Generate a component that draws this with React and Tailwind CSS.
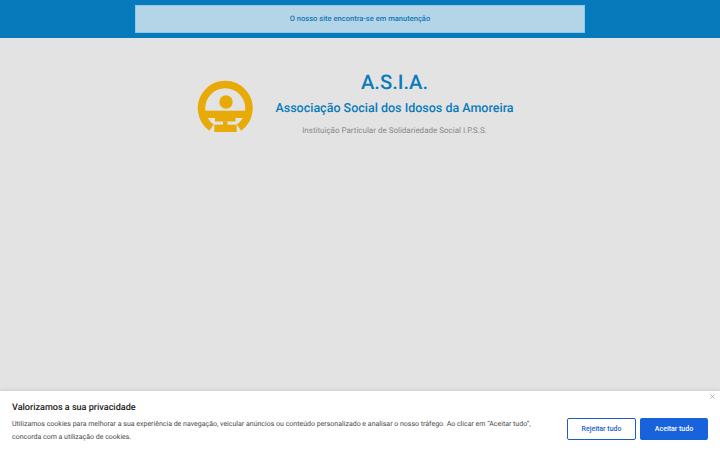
export default function App() {
  return (
    <div className="relative w-[720px] h-[450px] overflow-hidden bg-[#e3e3e3] font-['Roboto',sans-serif] [text-rendering:geometricPrecision]">
      <div className="h-[38px] bg-[#067abb] flex justify-center pt-[5px]">
        <div className="w-[450px] h-[28px] bg-[#b4d5e8] border border-[#8ccaea] flex items-center justify-center text-[#1479b5] text-[7.55px] font-medium">
          O nosso site encontra-se em manutenção
        </div>
      </div>
      <div className="flex pl-[197px] pt-[32px]">
        <svg width="58" height="56" viewBox="0 0 58 56" className="mt-[10px]">
          <path d="M14.5 47.6 A23.75 23.75 0 1 1 42 47.6" fill="none" stroke="#e8aa07" strokeWidth="7.5" />
          <circle cx="29" cy="22" r="6.7" fill="#e8aa07" />
          <rect x="8" y="30.7" width="40.5" height="7.3" fill="#e8aa07" />
          <rect x="18" y="38" width="20.5" height="3.5" fill="#e8aa07" />
          <rect x="26" y="41.5" width="4.5" height="4" fill="#e8aa07" />
          <rect x="17.3" y="44.7" width="22.4" height="7.3" fill="#e8aa07" />
        </svg>
        <div className="ml-[20px] w-[239px] flex flex-col items-center">
          <div className="text-[20.2px] leading-[24px] font-medium text-[#0a7bbb] whitespace-nowrap">A.S.I.A.</div>
          <div className="text-[12.5px] leading-[16px] font-medium text-[#0a7bbb] whitespace-nowrap mt-[7px]">Associação Social dos Idosos da Amoreira</div>
          <div className="text-[8px] leading-[12px] text-[#8a8a8a] whitespace-nowrap mt-[8px]">Instituição Particular de Solidariedade Social I.P.S.S.</div>
        </div>
      </div>
      <div className="absolute left-0 right-0 bottom-0 h-[59px] bg-white shadow-[0_0_4px_rgba(0,0,0,0.15)] flex items-start pl-[12px] pr-[12px]">
        <div className="w-[525px] pt-[11px]">
          <div className="text-[9.05px] leading-[12px] font-medium text-[#222222]">Valorizamos a sua privacidade</div>
          <div className="mt-[4px] text-[7px] leading-[12.6px] text-[#4a4a4a]">
            Utilizamos cookies para melhorar a sua experiência de navegação, veicular anúncios ou conteúdo personalizado e analisar o nosso tráfego. Ao clicar em “Aceitar tudo”, concorda com a utilização de cookies.
          </div>
        </div>
        <div className="ml-auto flex gap-[4px] pt-[27px]">
          <button className="w-[69px] h-[22px] border border-[#1a5fbf] rounded-[2px] bg-white text-[#1a5fd0] text-[7px] font-medium">Rejeitar tudo</button>
          <button className="w-[68px] h-[22px] bg-[#1863dc] rounded-[2px] text-white text-[7px] font-medium">Aceitar tudo</button>
        </div>
        <svg className="absolute top-[3px] right-[5px]" width="5" height="5" viewBox="0 0 5 5"><path d="M0.5 0.5L4.5 4.5M4.5 0.5L0.5 4.5" stroke="#9a9a9a" strokeWidth="0.7" /></svg>
      </div>
    </div>
  );
}
